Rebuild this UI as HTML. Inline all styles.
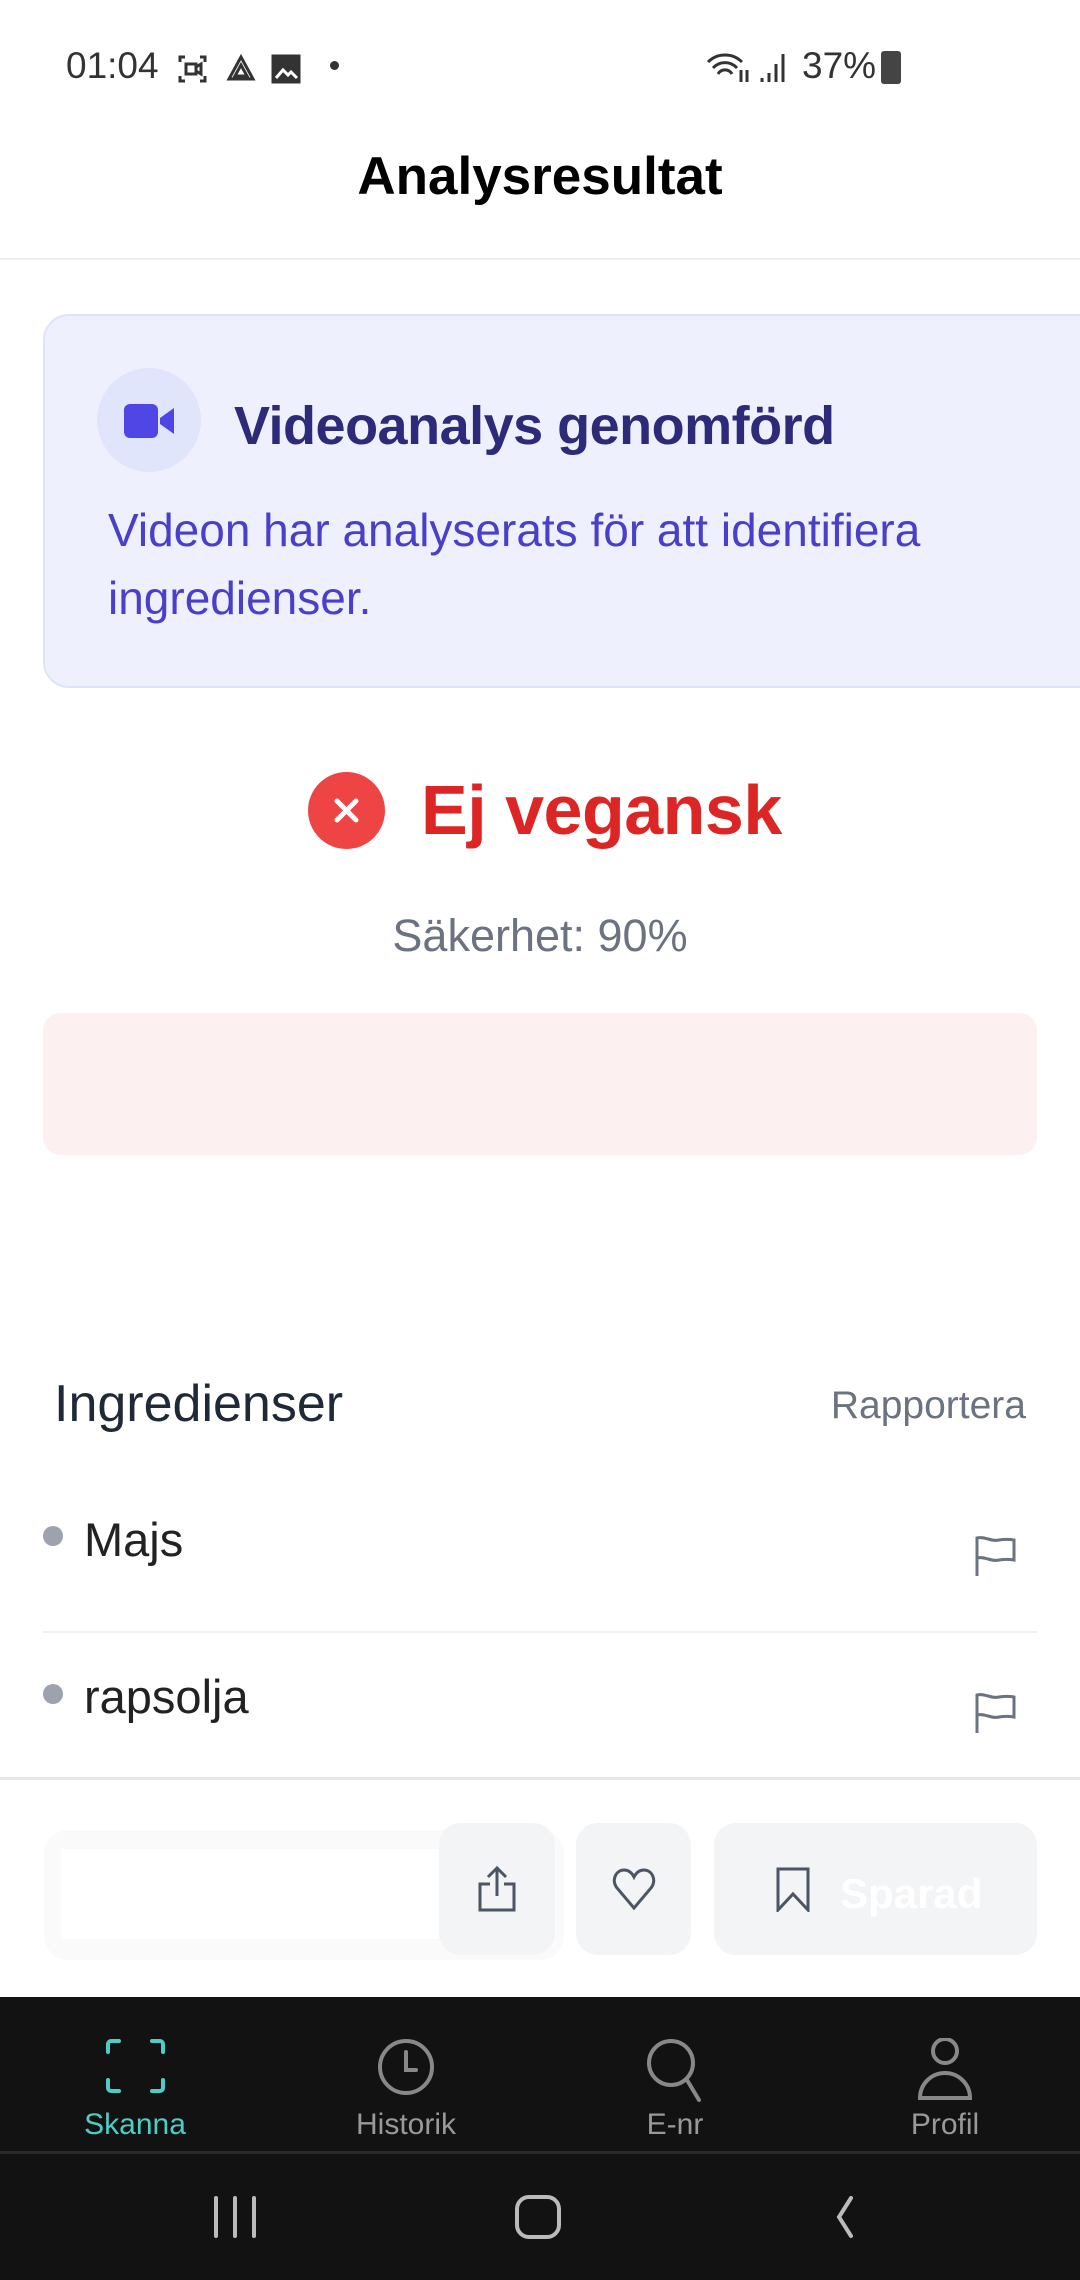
<!DOCTYPE html>
<html><head><meta charset="utf-8"><style>
*{margin:0;padding:0;box-sizing:border-box}
body{width:1080px;height:2280px;position:relative;background:#fff;font-family:"Liberation Sans",sans-serif;overflow:hidden}
.a{position:absolute;white-space:nowrap}
</style></head><body>
<div class="a" style="left:66px;top:45px;font-size:37px;color:#333">01:04</div>
<svg class="a" style="left:178px;top:54px" width="140" height="30" viewBox="0 0 140 30" fill="none" stroke="#333" stroke-width="3">
<path d="M2 8V3h5M22 3h5v5M27 22v5h-5M7 27H2v-5"/><rect x="8" y="10" width="10" height="10"/><path d="M18 13l5-3v10l-5-3"/>
<path d="M63 3l-12 22h24z"/><path d="M63 11l-6 11h12z"/>
<rect x="95" y="2" width="26" height="26" fill="#333"/><path d="M98 24l7-8 5 5 3-3 6 6" stroke="#fff"/></svg>
<div class="a" style="left:330px;top:61px;width:9px;height:9px;border-radius:50%;background:#333"></div>
<svg class="a" style="left:706px;top:50px" width="86" height="34" viewBox="0 0 86 34" fill="none" stroke="#333" stroke-width="3">
<path d="M2 12a24 24 0 0 1 34 0M7 18a16 16 0 0 1 24 0M12 24a8 8 0 0 1 14 0"/><path d="M35 20v12M41 32V20"/>
<path d="M56 32v-4M63 32v-9M70 32V14M77 32V4"/></svg>
<div class="a" style="left:802px;top:45px;font-size:37px;color:#333">37%</div>
<div class="a" style="left:881px;top:51px;width:20px;height:33px;border-radius:3px;background:#444"></div>
<div class="a" style="left:0;top:146px;width:1080px;text-align:center;font-size:53px;font-weight:bold;color:#000">Analysresultat</div>
<div class="a" style="left:0;top:258px;width:1080px;height:2px;background:#eee"></div>

<div class="a" style="left:43px;top:314px;width:1080px;height:374px;background:#eef1fd;border:2px solid #dde3f8;border-radius:26px"></div>
<div class="a" style="left:97px;top:368px;width:104px;height:104px;border-radius:50%;background:#e0e5fc"></div>
<svg class="a" style="left:124px;top:404px" width="52" height="34" viewBox="0 0 52 34"><rect x="0" y="0" width="34" height="34" rx="6" fill="#4f46e5"/><path d="M36 14l14-10v26l-14-10z" fill="#4f46e5"/></svg>
<div class="a" style="left:234px;top:395px;font-size:54px;font-weight:bold;color:#2e2a7a;letter-spacing:-0.5px">Videoanalys genomförd</div>
<div class="a" style="left:108px;top:496px;font-size:46px;line-height:68px;color:#4a3fc8">Videon har analyserats för att identifiera<br>ingredienser.</div>

<div class="a" style="left:308px;top:772px;width:77px;height:77px;border-radius:50%;background:#ef4444"></div>
<svg class="a" style="left:330px;top:794px" width="33" height="33" viewBox="0 0 33 33" stroke="#fff" stroke-width="5" stroke-linecap="round"><path d="M7 7l19 19M26 7L7 26"/></svg>
<div class="a" style="left:421px;top:770px;font-size:70px;font-weight:bold;color:#dc2626;letter-spacing:-0.5px">Ej vegansk</div>
<div class="a" style="left:0;top:910px;width:1080px;text-align:center;font-size:45px;color:#6b7280">Säkerhet: 90%</div>
<div class="a" style="left:43px;top:1013px;width:994px;height:142px;background:#fdf0f0;border-radius:18px"></div>

<div class="a" style="left:54px;top:1374px;font-size:52px;color:#1f2937">Ingredienser</div>
<div class="a" style="right:54px;top:1384px;font-size:39px;color:#6b7280">Rapportera</div>
<div class="a" style="left:43px;top:1526px;width:20px;height:20px;border-radius:50%;background:#9ca3af"></div>
<div class="a" style="left:84px;top:1512px;font-size:47px;color:#222">Majs</div>
<svg class="a" style="left:974px;top:1534px" width="44" height="44" viewBox="0 0 44 44" fill="none" stroke="#6b7280" stroke-width="3"><path d="M3 42V4c8-2 14 4 22 2 6-1 10-1 15 0v20c-5-1-9-1-15 0-8 2-14-4-22-2"/></svg>
<div class="a" style="left:43px;top:1631px;width:994px;height:2px;background:#f0f0f0"></div>
<div class="a" style="left:43px;top:1684px;width:20px;height:20px;border-radius:50%;background:#9ca3af"></div>
<div class="a" style="left:84px;top:1669px;font-size:47px;color:#222">rapsolja</div>
<svg class="a" style="left:974px;top:1691px" width="44" height="44" viewBox="0 0 44 44" fill="none" stroke="#6b7280" stroke-width="3"><path d="M3 42V4c8-2 14 4 22 2 6-1 10-1 15 0v20c-5-1-9-1-15 0-8 2-14-4-22-2"/></svg>
<div class="a" style="left:0;top:1777px;width:1080px;height:3px;background:#e5e7eb"></div>

<div class="a" style="left:44px;top:1830px;width:520px;height:130px;border-radius:24px;background:#fafafa"></div>
<div class="a" style="left:61px;top:1849px;width:420px;height:90px;background:#fff"></div>
<div class="a" style="left:439px;top:1823px;width:116px;height:132px;border-radius:22px;background:#f3f4f6"></div>
<svg class="a" style="left:477px;top:1866px" width="40" height="46" viewBox="0 0 40 46" fill="none" stroke="#4b5563" stroke-width="3"><path d="M20 2v28M11 11l9-9 9 9M13 18H3v26h34V18H27"/></svg>
<div class="a" style="left:576px;top:1823px;width:115px;height:132px;border-radius:22px;background:#f3f4f6"></div>
<svg class="a" style="left:612px;top:1868px" width="44" height="42" viewBox="0 0 44 42" fill="none" stroke="#4b5563" stroke-width="3"><path d="M22 40L5 20C-1 12 4 2 12 2c5 0 8 3 10 7 2-4 5-7 10-7 8 0 13 10 7 18z"/></svg>
<div class="a" style="left:714px;top:1823px;width:323px;height:132px;border-radius:22px;background:#f3f4f6"></div>
<svg class="a" style="left:775px;top:1866px" width="36" height="46" viewBox="0 0 36 46" fill="none" stroke="#4b5563" stroke-width="3"><path d="M3 3h30v41L18 28 3 44z"/></svg>
<div class="a" style="left:840px;top:1870px;font-size:42px;font-weight:bold;color:#fff">Sparad</div>

<div class="a" style="left:0;top:1997px;width:1080px;height:283px;background:#121212"></div>
<div class="a" style="left:0;top:2151px;width:1080px;height:3px;background:#2a2a2a"></div>
<svg class="a" style="left:0;top:2038px" width="1080" height="70" viewBox="0 0 1080 70" fill="none" stroke-width="4" stroke-linecap="round">
<path d="M108 14V6a3 3 0 0 1 3-3h8M152 3h8a3 3 0 0 1 3 3v8M163 42v8a3 3 0 0 1-3 3h-8M119 53h-8a3 3 0 0 1-3-3v-8" stroke="#4ecdc4"/>
<g stroke="#888"><circle cx="406" cy="29" r="26"/><path d="M406 14v18h10"/>
<circle cx="671" cy="25" r="22"/><path d="M687 42l12 20"/>
<circle cx="945" cy="13" r="12"/><path d="M920 60a25 25 0 0 1 50 0z"/></g></svg>
<div class="a" style="left:35px;top:2108px;width:200px;text-align:center;font-size:30px;color:#4ecdc4">Skanna</div>
<div class="a" style="left:306px;top:2108px;width:200px;text-align:center;font-size:30px;color:#999">Historik</div>
<div class="a" style="left:575px;top:2108px;width:200px;text-align:center;font-size:30px;color:#999">E-nr</div>
<div class="a" style="left:845px;top:2108px;width:200px;text-align:center;font-size:30px;color:#999">Profil</div>
<svg class="a" style="left:0;top:2190px" width="1080" height="60" viewBox="0 0 1080 60" fill="none" stroke="#bbb" stroke-width="4" stroke-linecap="round">
<path d="M216 8v38M235 8v38M254 8v38"/><rect x="517" y="7" width="42" height="40" rx="12"/><path d="M851 8l-12 19 12 19"/></svg>
</body></html>
